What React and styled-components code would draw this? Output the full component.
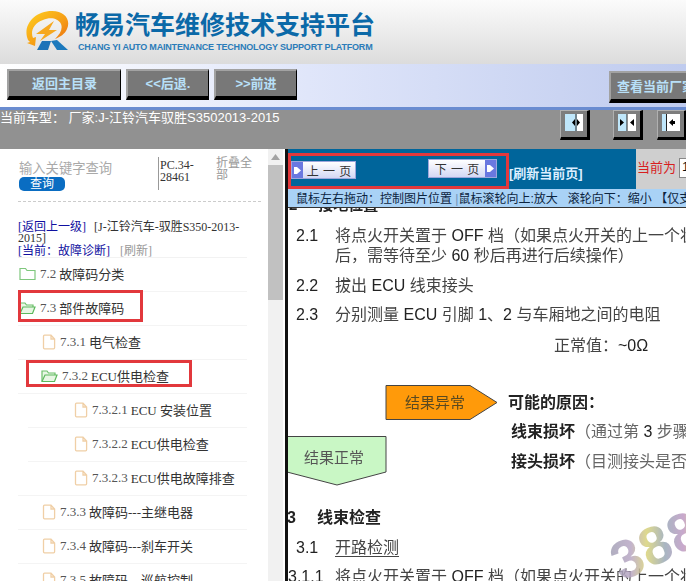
import React from 'react'
import styled, { createGlobalStyle } from 'styled-components'

const GlobalStyle = createGlobalStyle`
html, body {
  margin: 0;
  padding: 0;
  background: #fff;
  overflow: hidden;
}
* { box-sizing: border-box; }
`
const SERIF = `"Liberation Serif", "Noto Sans CJK SC", serif`
const SANS = `"Liberation Sans", "Noto Sans CJK SC", sans-serif`

const Page = styled.div`
  position: relative;
  width: 686px;
  height: 581px;
  overflow: hidden;
  font-family: ${SANS};
`
// top banner
const Header = styled.div`
  height: 64px;
  display: flex;
  align-items: flex-start;
  padding: 10px 0 0 24px;
  background: linear-gradient(180deg, #fbfbfb 0%, #dcdcdc 100%);
`
const BrandText = styled.div`
  margin: 1px 0 0 5px;
`
const BrandTitle = styled.div`
  font-size: 25px;
  line-height: 28px;
  font-weight: 700;
  color: #0b69a8;
  white-space: nowrap;
`
const BrandSub = styled.div`
  margin: 2px 0 0 3px;
  font-size: 9px;
  line-height: 12px;
  font-weight: 700;
  color: #2b7cb9;
  white-space: nowrap;
  letter-spacing: -0.18px;
`
const Nav = styled.div`
  height: 46px;
  display: flex;
  gap: 5px;
  padding: 5px 0 0 7px;
  background: linear-gradient(90deg, #fff 0%, #e0e6fa 45%, #bfcbee 100%);
  border-bottom: 3px solid #6a8cd0;
  overflow: hidden;
`
const NavButton = styled.div`
  flex: none;
  width: ${p => p.$w}px;
  height: ${p => p.$h || 31}px;
  margin: ${p => p.$m || 0};
  display: flex;
  align-items: center;
  justify-content: ${p => p.$start ? 'flex-start' : 'center'};
  padding: 0 0 2px ${p => p.$start ? 6 : 0}px;
  background: #787878;
  border-style: solid;
  border-width: 2px 1px 4px 2px;
  border-color: #a2a2a2 #000 #000 #a2a2a2;
  color: #b8e0f8;
  font-size: 13px;
  font-weight: 700;
  white-space: nowrap;
  overflow: hidden;
`
const ModelBar = styled.div`
  height: 39px;
  display: flex;
  align-items: flex-start;
  background: #919191;
  color: #fff;
  font-size: 13px;
  line-height: 16px;
`
const ModelText = styled.div`
  flex: 1;
  white-space: nowrap;
`
const ToggleGroup = styled.div`
  display: flex;
  gap: 23px;
  width: 126px;
  flex: none;
`
const ToggleButton = styled.div`
  flex: none;
  width: 30px;
  height: 30px;
  margin-left: ${p => p.$ml || 0}px;
  padding: 3px 4px 2px 4px;
  background: #7d7d7d;
  border-style: solid;
  border-width: 1px 3px 3px 1px;
  border-color: #b0b0b0 #000 #000 #b0b0b0;
  display: flex;
`
const Main = styled.div`
  height: 432px;
  display: flex;
`
// left tree panel
const Side = styled.div`
  flex: none;
  width: 285px;
  display: flex;
  background: #fff;
`
const Tree = styled.div`
  flex: none;
  width: 268px;
  overflow: hidden;
  padding: 8px 0 0 18px;
`
const SearchRow = styled.div`
  display: flex;
  height: 44px;
  width: 242px;
`
const SearchCol = styled.div`
  width: 140px;
  flex: none;
  padding: 4px 0 0 1px;
`
const SearchHint = styled.div`
  color: #a9a9a9;
  font-size: 13.3px;
  line-height: 16px;
  white-space: nowrap;
`
const SearchButton = styled.div`
  width: 46px;
  height: 14px;
  background: #0a6dc2;
  border-radius: 5px;
  color: #fff;
  font-size: 12px;
  line-height: 14px;
  text-align: center;
`
const PartNo = styled.div`
  width: 58px;
  height: 33px;
  flex: none;
  border-left: 1px solid #999;
  padding: 2px 0 0 1px;
  font-family: ${SERIF};
  font-size: 12px;
  line-height: 12px;
  color: #333;
`
const Collapse = styled.div`
  width: 40px;
  color: #999;
  font-size: 12px;
  line-height: 12px;
`
const Dash = styled.div`
  width: 243px;
  border-top: 1px dashed #ccc;
`
const Crumbs = styled.div`
  width: 229px;
  height: 36px;
  margin-top: 20px;
  font-family: ${SERIF};
  font-size: 12px;
  line-height: 11px;
  color: #333;
  border-bottom: 1px solid #f2f2f2;
`
const CrumbLink = styled.span`
  color: ${p => p.$gray ? '#999' : '#1010a0'};
  margin-right: ${p => p.$gap || 0}px;
`
const CrumbLine = styled.div`
  margin-top: 2px;
  line-height: 11px;
`
const TreeList = styled.div`
  width: 229px;
`
const Row = styled.div`
  position: relative;
  height: 34px;
  margin-left: ${p => p.$line}px;
  padding: 0 0 2px ${p => p.$pad}px;
  display: flex;
  align-items: center;
  border-bottom: 1px solid #f4f4f4;
  font-family: ${SERIF};
  font-size: 13px;
  color: #333;
  white-space: nowrap;
`
const RowNo = styled.span`
  margin: 0 3px 0 4px;
  color: #555;
`
const RedBox = styled.div`
  position: absolute;
  left: ${p => p.$l}px;
  top: ${p => p.$t}px;
  width: ${p => p.$w}px;
  height: ${p => p.$h}px;
  border: 3px solid #e2383c;
`
const Scrollbar = styled.div`
  flex: none;
  width: 15px;
  background: #f1f1f1;
`
const ScrollUp = styled.div`
  height: 16px;
  display: flex;
  align-items: center;
  justify-content: center;
`
const ScrollThumb = styled.div`
  height: 135px;
  background: #c1c1c1;
`
// right document pane
const Pane = styled.div`
  position: relative;
  flex: none;
  width: 401px;
  border-left: 3px solid #111;
  background: #fff;
  overflow: hidden;
`
const Toolbar = styled.div`
  height: 40px;
  display: flex;
`
const ToolbarBlue = styled.div`
  width: 348px;
  height: 40px;
  flex: none;
  display: flex;
  background: #00659b;
`
const PagerBox = styled.div`
  width: 221px;
  height: 36px;
  flex: none;
  margin-top: 4px;
  padding: 3px 0 0 0;
  display: flex;
  border: 3px solid #e2383c;
`
const PageButton = styled.div`
  flex: none;
  width: ${p => p.$w}px;
  height: ${p => p.$h}px;
  margin-top: ${p => p.$mt}px;
  margin-left: ${p => p.$ml}px;
  display: flex;
  align-items: center;
  flex-direction: ${p => p.$rev ? 'row-reverse' : 'row'};
  background: linear-gradient(180deg, #fff 0%, #d3d8f4 100%);
  border: 1px solid #9ea6dc;
  color: #333;
  font-size: 12px;
  white-space: nowrap;
`
const PageArrow = styled.div`
  flex: none;
  width: 11px;
  align-self: stretch;
  background: #6a78e0;
  display: flex;
  align-items: center;
  justify-content: center;
`
const PageLabel = styled.div`
  flex: 1;
  text-align: center;
  word-spacing: 1px;
`
const Refresh = styled.div`
  margin: 17px 0 0 0;
  color: #dbeeff;
  font-size: 13px;
  line-height: 16px;
  font-weight: 700;
  white-space: nowrap;
`
const CurrentBox = styled.div`
  flex: 1;
  display: flex;
  padding: 11px 0 0 1px;
  background: #cfcfcf;
  color: #d81e1e;
  font-size: 13px;
  line-height: 16px;
  white-space: nowrap;
`
const PageInput = styled.div`
  flex: none;
  width: 30px;
  height: 20px;
  margin-left: 3px;
  margin-top: -2px;
  background: #fff;
  border: 1px solid #888;
  color: #111;
  padding-left: 2px;
`
const HintBar = styled.div`
  position: relative;
  z-index: 1;
  height: 19px;
  padding: 3px 0 0 8px;
  background: #a9d2f6;
  border-bottom: 1px solid #333;
  color: #0c2440;
  font-size: 12px;
  line-height: 14px;
  white-space: nowrap;
  overflow: hidden;
`
const HintSep = styled.span`
  color: #6f93b8;
`
const Doc = styled.div`
  position: relative;
  height: 390px;
  margin-top: -13px;
  font-family: ${SANS};
  font-size: 16px;
  color: #444;
  filter: blur(0.3px);
`
const DocInner = styled.div`
  padding-left: 8px;
`
const DocClip = styled.div`
  display: flex;
  margin-left: -7px;
  font-weight: 700;
  line-height: 20px;
  height: 20px;
  font-size: 15px;
  color: #222;
  span { margin-left: 21px; }
`
const DocRow = styled.div`
  display: flex;
  margin-top: ${p => p.$mt || 0}px;
  line-height: 20px;
  white-space: nowrap;
  margin-left: ${p => p.$ml || 0}px;
`
const DocNo = styled.div`
  flex: none;
  width: ${p => p.$w || 39}px;
  color: #222;
`
const DocBody = styled.div`
  flex: none;
  u { text-underline-offset: 3px; }
`
const DocLatin = styled.span`
  color: #222;
`
const Normal = styled.div`
  margin: 11px 0 0 258px;
  line-height: 20px;
  white-space: nowrap;
`
const Flow = styled.div`
  display: flex;
  margin: 29px 0 0 -8px;
  height: 102px;
`
const FlowShapes = styled.div`
  flex: none;
  width: 218px;
`
const FlowCauses = styled.div`
  white-space: nowrap;
  color: #666;
`
const CauseTitle = styled.div`
  margin: 8px 0 0 2px;
  font-weight: 700;
  font-size: 16px;
  line-height: 20px;
  color: #222;
`
const Cause = styled.div`
  margin: ${p => p.$mt}px 0 0 5px;
  line-height: 20px;
`
const CauseLead = styled.b`
  color: #222;
  font-weight: 700;
`
const SectionTitle = styled.div`
  margin: 20px 0 0 -9px;
  font-size: 16px;
  font-weight: 700;
  line-height: 22px;
  white-space: nowrap;
  color: #222;
  span { margin-left: 21px; }
`
const Watermark = styled.div`
  position: absolute;
  left: 314px;
  top: 345px;
  width: 120px;
  transform: rotate(-25deg);
  transform-origin: left top;
  font-family: "Liberation Sans", sans-serif;
  font-size: 54px;
  font-weight: 700;
  line-height: 54px;
  letter-spacing: 1px;
  background: linear-gradient(115deg, #9a9fb0 0%, #b9a7c4 22%, #d9d37a 34%, #9aa9b8 48%, #c09ac4 62%, #e0d870 72%, #98a8b8 90%);
  -webkit-background-clip: text;
  background-clip: text;
  color: transparent;
  opacity: 0.85;
`

const FolderIcon = ({ open }) => (
  <svg width="17" height="15" viewBox="0 0 17 15" style={{ flex: 'none' }}>
    {open ? (
      <>
        <path d="M1 13V3h5l1.5 2H14v2" fill="#e8f6e4" stroke="#6cbf6a" strokeWidth="1.2" />
        <path d="M1 13.5L4 7h12l-2.5 6.5z" fill="#e8f6e4" stroke="#5cb85c" strokeWidth="1.2" />
      </>
    ) : (
      <path d="M1 13.5V2.5h5.5l1.5 2h8v9z" fill="#fff" stroke="#7fc77d" strokeWidth="1.2" />
    )}
  </svg>
)
const FileIcon = () => (
  <svg width="14" height="16" viewBox="0 0 14 16" style={{ flex: 'none' }}>
    <path d="M1.5 2.2q0-1 1-1H9l3.6 3.8v8.8q0 1-1 1H2.5q-1 0-1-1z M9 1.2V5h3.6" fill="#fff" stroke="#f0cfa6" strokeWidth="1.3" />
  </svg>
)
const Logo = () => (
  <svg width="46" height="42" viewBox="0 0 46 42" style={{ flex: 'none' }}>
    <defs>
      <linearGradient id="swirl" x1="0" y1="0" x2="1" y2="1">
        <stop offset="0" stopColor="#ffd21f" />
        <stop offset="0.6" stopColor="#f59a16" />
        <stop offset="1" stopColor="#e8650f" />
      </linearGradient>
    </defs>
    <path d="M4 30C-2 16 10 1 28 1c13 0 19 9 15 18-2 5-7 8-12 10 5-5 8-10 6-15-3-6-11-7-18-4C10 13 6 21 9 28l3-1-1 9-8-3 3-1z" fill="url(#swirl)" />
    <path d="M12 24L30 11l-5 9h8L16 31l5-7z" fill="#f6a81f" />
    <path d="M13 40l5-9h9l-3 9z" fill="#1e73b8" />
    <path d="M27 31l6-1 11 10H33z" fill="#1b79bd" />
  </svg>
)
const ToggleIcon = ({ kind }) => (
  <svg width="18" height="17" viewBox="0 0 18 17" style={{ flex: 'none' }}>
    {kind === 'right' && (
      <>
        <rect width="18" height="17" fill="#bfe6fa" />
        <rect x="12" width="6" height="17" fill="#fff" />
        <path d="M11 0v17" stroke="#222" />
        <path d="M7 8.5l3-3.5v7zM12 5l3 3.5-3 3.5z" fill="#000" />
      </>
    )}
    {kind === 'both' && (
      <>
        <rect width="9" height="17" fill="#bfe6fa" />
        <rect x="9" width="9" height="17" fill="#fff" />
        <path d="M9 0v17" stroke="#222" />
        <path d="M2 5l4 3.5-4 3.5zM16 5l-4 3.5 4 3.5z" fill="#000" />
      </>
    )}
    {kind === 'left' && (
      <>
        <rect width="18" height="17" fill="#fff" />
        <rect width="4" height="17" fill="#bfe6fa" />
        <path d="M4.5 0v17" stroke="#222" />
        <path d="M7 8.5l4-3.5v7z M11 7h2v3h-2z" fill="#000" />
      </>
    )}
  </svg>
)
const PageGlyph = () => (
  <svg width="9" height="11" viewBox="0 0 9 11">
    <path d="M1 2h3l4 3.5L4 9H1z" fill="#fff" />
  </svg>
)

const rows = [
  { no: '7.2', text: '故障码分类', icon: 'folder', line: 0, pad: 1 },
  { no: '7.3', text: '部件故障码', icon: 'open', line: 0, pad: 1, box: [0, -2, 125, 32] },
  { no: '7.3.1', text: '电气检查', icon: 'file', line: 0, pad: 24 },
  { no: '7.3.2', text: 'ECU供电检查', icon: 'open', line: 0, pad: 23, box: [8, 0, 166, 27] },
  { no: '7.3.2.1', text: 'ECU 安装位置', icon: 'file', line: 10, pad: 46 },
  { no: '7.3.2.2', text: 'ECU供电检查', icon: 'file', line: 10, pad: 46 },
  { no: '7.3.2.3', text: 'ECU供电故障排查', icon: 'file', line: 0, pad: 56 },
  { no: '7.3.3', text: '故障码---主继电器', icon: 'file', line: 0, pad: 24 },
  { no: '7.3.4', text: '故障码---刹车开关', icon: 'file', line: 0, pad: 24 },
  { no: '7.3.5', text: '故障码---巡航控制', icon: 'file', line: 0, pad: 24 },
]

export default function App() {
  return (
    <Page>
      <GlobalStyle />
      <Header>
        <Logo />
        <BrandText>
          <BrandTitle>畅易汽车维修技术支持平台</BrandTitle>
          <BrandSub>CHANG YI AUTO MAINTENANCE TECHNOLOGY SUPPORT PLATFORM</BrandSub>
        </BrandText>
      </Header>
      <Nav>
        <NavButton $w={114}>返回主目录</NavButton>
        <NavButton $w={83}>&lt;&lt;后退.</NavButton>
        <NavButton $w={83}>&gt;&gt;前进</NavButton>
        <NavButton $w={90} $h={32} $m="2px 0 0 307px" $start>查看当前厂家</NavButton>
      </Nav>
      <ModelBar>
        <ModelText>当前车型： 厂家:J-江铃汽车驭胜S3502013-2015</ModelText>
        <ToggleGroup>
          <ToggleButton><ToggleIcon kind="right" /></ToggleButton>
          <ToggleButton><ToggleIcon kind="both" /></ToggleButton>
          <ToggleButton $ml={-9}><ToggleIcon kind="left" /></ToggleButton>
        </ToggleGroup>
      </ModelBar>
      <Main>
        <Side>
          <Tree>
            <SearchRow>
              <SearchCol>
                <SearchHint>输入关键字查询</SearchHint>
                <SearchButton>查询</SearchButton>
              </SearchCol>
              <PartNo>PC.34-28461</PartNo>
              <Collapse>折叠全部</Collapse>
            </SearchRow>
            <Dash />
            <Crumbs>
              <CrumbLink $gap={8}>[返回上一级]</CrumbLink>
              [J-江铃汽车-驭胜S350-2013-2015]
              <CrumbLine>
                <CrumbLink $gap={10}>[当前：故障诊断]</CrumbLink>
                <CrumbLink $gray>[刷新]</CrumbLink>
              </CrumbLine>
            </Crumbs>
            <TreeList>
              {rows.map(r => (
                <Row key={r.no} $line={r.line} $pad={r.pad}>
                  {r.icon === 'file' ? <FileIcon /> : <FolderIcon open={r.icon === 'open'} />}
                  <RowNo>{r.no}</RowNo>
                  {r.text}
                  {r.box && <RedBox $l={r.box[0]} $t={r.box[1]} $w={r.box[2]} $h={r.box[3]} />}
                </Row>
              ))}
            </TreeList>
          </Tree>
          <Scrollbar>
            <ScrollUp>
              <svg width="9" height="6" viewBox="0 0 9 6"><path d="M4.5 0L9 6H0z" fill="#a3a3a3" /></svg>
            </ScrollUp>
            <ScrollThumb />
          </Scrollbar>
        </Side>
        <Pane>
          <Toolbar>
            <ToolbarBlue>
              <PagerBox>
                <PageButton $w={65} $h={18} $mt={2} $ml={0}>
                  <PageArrow><PageGlyph /></PageArrow>
                  <PageLabel>上 一 页</PageLabel>
                </PageButton>
                <PageButton $w={69} $h={19} $mt={0} $ml={72} $rev>
                  <PageArrow><PageGlyph /></PageArrow>
                  <PageLabel>下 一 页</PageLabel>
                </PageButton>
              </PagerBox>
              <Refresh>[刷新当前页]</Refresh>
            </ToolbarBlue>
            <CurrentBox>
              当前为
              <PageInput>1</PageInput>
            </CurrentBox>
          </Toolbar>
          <HintBar>鼠标左右拖动：控制图片位置 <HintSep>|</HintSep>鼠标滚轮向上:放大&nbsp;&nbsp;&nbsp;滚轮向下：缩小 【仅支持IE浏览器】</HintBar>
          <Doc>
            <DocInner>
              <DocClip>2<span>接地位置</span></DocClip>
              <DocRow $mt={11}>
                <DocNo>2.1</DocNo>
                <DocBody>将点火开关置于 <DocLatin>OFF</DocLatin> 档（如果点火开关的上一个状态为 ON</DocBody>
              </DocRow>
              <DocRow>
                <DocNo />
                <DocBody>后，需等待至少 <DocLatin>60</DocLatin> 秒后再进行后续操作）</DocBody>
              </DocRow>
              <DocRow $mt={10}>
                <DocNo>2.2</DocNo>
                <DocBody>拔出 <DocLatin>ECU</DocLatin> 线束接头</DocBody>
              </DocRow>
              <DocRow $mt={9}>
                <DocNo>2.3</DocNo>
                <DocBody>分别测量 <DocLatin>ECU</DocLatin> 引脚 <DocLatin>1</DocLatin>、<DocLatin>2</DocLatin> 与车厢地之间的电阻</DocBody>
              </DocRow>
              <Normal>正常值：<DocLatin>~0Ω</DocLatin></Normal>
              <Flow>
                <FlowShapes>
                  <svg width="218" height="102" viewBox="0 0 218 102" fontFamily={SANS} fontSize="15">
                    <path d="M98 .5H182L209 17.5L182 34.5H98z" fill="#ff9a0a" stroke="#444" />
                    <text x="117" y="23" fill="#5a4a20">结果异常</text>
                    <path d="M-1 51.5H98V87L49 100L-1 87z" fill="#c9f7c5" stroke="#444" />
                    <text x="16" y="78" fill="#555">结果正常</text>
                  </svg>
                </FlowShapes>
                <FlowCauses>
                  <CauseTitle>可能的原因：</CauseTitle>
                  <Cause $mt={9}><CauseLead>线束损坏</CauseLead>（通过第 <DocLatin>3</DocLatin> 步骤检查）</Cause>
                  <Cause $mt={10}><CauseLead>接头损坏</CauseLead>（目测接头是否松动）</Cause>
                </FlowCauses>
              </Flow>
              <SectionTitle>3<span>线束检查</span></SectionTitle>
              <DocRow $mt={9}>
                <DocNo>3.1</DocNo>
                <DocBody><u>开路检测</u></DocBody>
              </DocRow>
              <DocRow $mt={9} $ml={-8}>
                <DocNo $w={47}>3.1.1</DocNo>
                <DocBody>将点火开关置于 <DocLatin>OFF</DocLatin> 档（如果点火开关的上一个状态</DocBody>
              </DocRow>
            </DocInner>
            <Watermark>388</Watermark>
          </Doc>
        </Pane>
      </Main>
    </Page>
  )
}
